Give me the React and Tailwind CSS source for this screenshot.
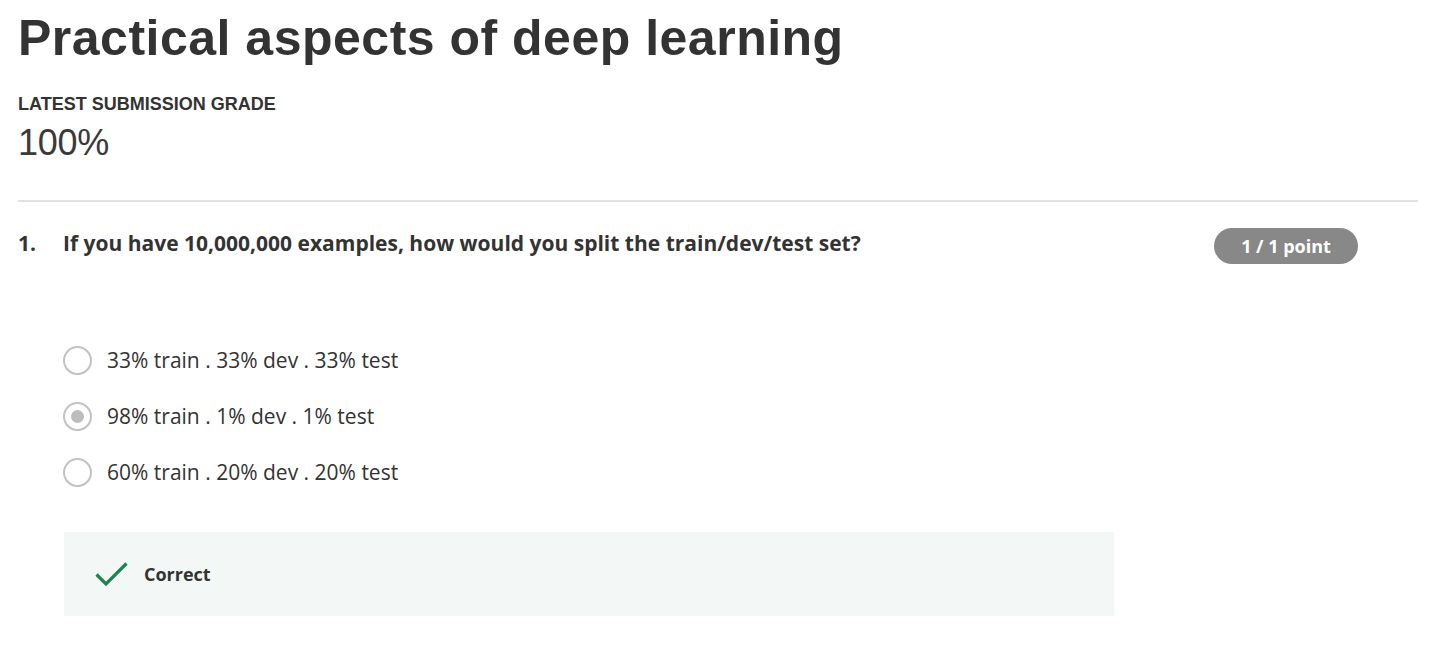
import React from 'react';

const options = [
  { id: 'a', label: '33% train . 33% dev . 33% test', checked: false },
  { id: 'b', label: '98% train . 1% dev . 1% test', checked: true },
  { id: 'c', label: '60% train . 20% dev . 20% test', checked: false },
];

const Radio = ({ checked }) => (
  <span className="flex h-[29px] w-[29px] shrink-0 items-center justify-center rounded-full border-2 border-[#c2c2c2] bg-white">
    {checked && <span className="h-[13px] w-[13px] rounded-full bg-[#bdbdbd]" />}
  </span>
);

const App = () => {
  return (
    <div className="min-h-screen bg-white pl-[18px] pr-[16px] text-[#333]">
      <h1 className="pt-[13px] font-['Liberation_Sans',Arial,sans-serif] text-[50px] font-bold leading-none tracking-[0.5px] text-[#333]">
        Practical aspects of deep learning
      </h1>

      <div className="mt-[32px] font-['Liberation_Sans',Arial,sans-serif] text-[18px] font-bold uppercase leading-none text-[#333]">
        Latest submission grade
      </div>
      <div className="mt-[12px] font-['Liberation_Sans',Arial,sans-serif] text-[36px] font-normal leading-none tracking-[-0.3px] text-[#3a3a3a]">
        100%
      </div>

      <hr className="mt-[39px] border-t-2 border-[#e1e1e1]" />

      <div className="pr-[60px] font-['Open_Sans',sans-serif]">
        <div className="mt-[26px] flex items-start justify-between">
          <div className="mt-[1px] flex text-[21px] font-bold leading-[28px] text-[#333]">
            <span className="w-[45px]">1.</span>
            <span>If you have 10,000,000 examples, how would you split the train/dev/test set?</span>
          </div>
          <span className="flex h-[36px] w-[144px] items-center justify-center rounded-full bg-[#888] text-[18px] font-bold text-white">
            1 / 1 point
          </span>
        </div>

        <div className="mt-[82px] ml-[45px] flex flex-col gap-[27px]">
          {options.map((o) => (
            <label key={o.id} className="flex h-[29px] items-center gap-[15px] text-[21px] leading-[29px] text-[#333]">
              <Radio checked={o.checked} />
              <span>{o.label}</span>
            </label>
          ))}
        </div>

        <div className="mt-[45px] ml-[46px] flex h-[84px] w-[1050px] items-center bg-[#f3f8f6] pl-[31px]">
          <svg width="33" height="26" viewBox="0 0 33 26" fill="none">
            <path d="M1.5 13.5 L11 23 L31.5 2.5" stroke="#1f8354" strokeWidth="3.2" />
          </svg>
          <span className="ml-[16px] text-[18px] font-bold text-[#333]">Correct</span>
        </div>
      </div>
    </div>
  );
};

export default App;
